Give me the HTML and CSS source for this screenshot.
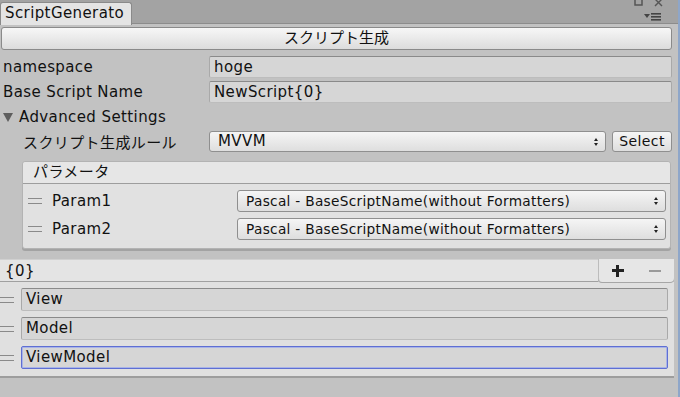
FILE: index.html
```html
<!DOCTYPE html>
<html lang="ja">
<head>
    <meta charset="UTF-8">
    <title>ScriptGenerator</title>
    <link rel="stylesheet" href="styles.css">
</head>
<body>
    <div class="window">
        <div class="tabbar">
            <div class="tab">ScriptGenerato</div>
            <div class="tab-icons">
                <svg class="icon-top" width="40" height="22" viewBox="0 0 40 22">
                    <rect x="3" y="-2" width="7" height="7" fill="none" stroke="#555" stroke-width="1.5"/>
                    <path d="M23 -1 L30 6 M30 -1 L23 6" stroke="#555" stroke-width="1.4"/>
                    <path d="M12 14 L18 14 L15 18 Z" fill="#444"/>
                    <rect x="19" y="13" width="10" height="1.6" fill="#444"/>
                    <rect x="19" y="16" width="10" height="1.6" fill="#444"/>
                    <rect x="19" y="19" width="10" height="1.6" fill="#444"/>
                </svg>
            </div>
        </div>

        <div class="content">
            <div class="btn-generate">スクリプト生成</div>

            <div class="row">
                <div class="label">namespace</div>
                <div class="field">hoge</div>
            </div>
            <div class="row">
                <div class="label">Base Script Name</div>
                <div class="field">NewScript{0}</div>
            </div>

            <div class="foldout">
                <span class="arrow"></span>
                <span>Advanced Settings</span>
            </div>

            <div class="row">
                <div class="label indent">スクリプト生成ルール</div>
                <div class="popup grow">MVVM<span class="updown"></span></div>
                <div class="btn-select">Select</div>
            </div>

            <div class="param-box">
                <div class="param-head">パラメータ</div>
                <div class="param-row">
                    <span class="handle"></span>
                    <span class="param-name">Param1</span>
                    <div class="popup small">Pascal - BaseScriptName(without Formatters)<span class="updown"></span></div>
                </div>
                <div class="param-row">
                    <span class="handle"></span>
                    <span class="param-name">Param2</span>
                    <div class="popup small">Pascal - BaseScriptName(without Formatters)<span class="updown"></span></div>
                </div>
            </div>

            <div class="list">
                <div class="list-top">
                    <div class="list-head">{0}</div>
                    <div class="list-footer">
                        <span class="plus"></span>
                        <span class="minus"></span>
                    </div>
                </div>
                <div class="list-body">
                    <div class="list-item">
                        <span class="handle"></span>
                        <div class="field">View</div>
                    </div>
                    <div class="list-item">
                        <span class="handle"></span>
                        <div class="field">Model</div>
                    </div>
                    <div class="list-item">
                        <span class="handle"></span>
                        <div class="field focus">ViewModel</div>
                    </div>
                </div>
            </div>
        </div>
    </div>
</body>
</html>
```

FILE: styles.css
```css
body {
    margin: 0;
    padding: 0;
    font-family: "DejaVu Sans", "Noto Sans CJK JP", sans-serif;
    font-size: 15px;
    letter-spacing: 0.4px;
    color: #111;
    background: #c2c2c2;
}
.window {
    width: 678px;
    height: 397px;
    border-right: 2px solid #8ea6c9;
    background: #c2c2c2;
    overflow: hidden;
}
.tabbar {
    display: flex;
    justify-content: space-between;
    height: 23px;
    background: #a3a3a3;
    border-bottom: 1px solid #8c8c8c;
}
.tab {
    margin-top: 2px;
    padding: 0 7px 0 4px;
    height: 22px;
    line-height: 21px;
    background: #e4e4e4;
    border: 1px solid #8a8a8a;
    border-bottom: none;
    border-radius: 3px 3px 0 0;
}
.tab-icons {
    padding-right: 6px;
}
.icon-top {
    display: block;
}
.content {
    padding-top: 3px;
}
.btn-generate {
    margin: 0 6px 0 1px;
    height: 21px;
    line-height: 21px;
    text-align: center;
    border: 1px solid #8a8a8a;
    border-radius: 3px;
    background: linear-gradient(#f7f7f7, #dcdcdc);
    letter-spacing: 0;
}
.row {
    display: flex;
    align-items: center;
    margin: 3px 6px 0 0;
}
.btn-generate + .row {
    margin-top: 6px;
}
.label {
    width: 206px;
    padding-left: 3px;
    flex-shrink: 0;
}
.label.indent {
    width: 186px;
    padding-left: 23px;
}
.field {
    flex: 1;
    height: 20px;
    line-height: 20px;
    padding-left: 4px;
    background: #d6d6d6;
    border: 1px solid #a9a9a9;
    border-top-color: #8a8a8a;
    border-bottom-color: #bdbdbd;
    border-radius: 2px;
}
.field.focus {
    border: 1px solid #5f6fd3;
    box-shadow: inset 0 0 0 1px #a9b4e8;
}
.foldout {
    display: flex;
    align-items: center;
    height: 22px;
    margin-top: 3px;
    padding-left: 3px;
}
.arrow {
    width: 0;
    height: 0;
    margin-right: 6px;
    border-left: 5px solid transparent;
    border-right: 5px solid transparent;
    border-top: 9px solid #5e5e5e;
}
.popup {
    position: relative;
    height: 19px;
    line-height: 19px;
    padding-left: 8px;
    border: 1px solid #8f8f8f;
    border-radius: 3px;
    background: linear-gradient(#f5f5f5, #dedede);
}
.popup.grow {
    flex: 1;
}
.popup.small {
    margin-left: auto;
    width: 419px;
    height: 20px;
    line-height: 20px;
    font-size: 13.7px;
    letter-spacing: 0.3px;
}
.updown {
    position: absolute;
    right: 7px;
    top: 6px;
    width: 0;
    height: 0;
    border-left: 2.5px solid transparent;
    border-right: 2.5px solid transparent;
    border-bottom: 3px solid #222;
}
.updown::after {
    content: "";
    position: absolute;
    left: -2.5px;
    top: 5px;
    border-left: 2.5px solid transparent;
    border-right: 2.5px solid transparent;
    border-top: 3px solid #222;
}
.btn-select {
    margin-left: 6px;
    width: 58px;
    height: 19px;
    line-height: 19px;
    text-align: center;
    font-size: 14px;
    border: 1px solid #8f8f8f;
    border-radius: 3px;
    background: linear-gradient(#f5f5f5, #dedede);
}
.param-box {
    margin: 9px 7px 0 22px;
    height: 86px;
    background: #e1e1e1;
    border: 1px solid #b3b3b3;
    border-radius: 3px;
    box-shadow: 0 2px 0 #a3a3a3;
}
.param-head {
    height: 21px;
    line-height: 21px;
    padding-left: 10px;
    background: #e6e6e6;
    border-bottom: 1px solid #9d9d9d;
    border-radius: 3px 3px 0 0;
}
.param-row {
    display: flex;
    align-items: center;
    margin: 6px 4px 0 5px;
}
.param-row + .param-row {
    margin-top: 6px;
}
.handle {
    width: 14px;
    height: 4px;
    border-top: 1px solid #8a8a8a;
    border-bottom: 1px solid #8a8a8a;
    flex-shrink: 0;
}
.param-name {
    margin-left: 10px;
}
.list {
    margin: 10px 4px 0 0;
}
.list-top {
    display: flex;
    height: 23px;
}
.list-head {
    flex: 1;
    padding-left: 5px;
    line-height: 22px;
    background: #e4e4e4;
    border-bottom: 1px solid #a0a0a0;
    border-top: 1px solid #d0d0d0;
}
.list-footer {
    display: flex;
    align-items: center;
    justify-content: space-around;
    width: 75px;
    background: #e6e6e6;
    border-left: 1px solid #bcbcbc;
    border-radius: 0 0 4px 4px;
    box-shadow: 0 1px 0 #a6a6a6;
}
.plus {
    position: relative;
    width: 12px;
    height: 3px;
    background: #222;
}
.plus::after {
    content: "";
    position: absolute;
    left: 4.5px;
    top: -4.5px;
    width: 3px;
    height: 12px;
    background: #222;
}
.minus {
    width: 12px;
    height: 2px;
    background: #9a9a9a;
}
.list-body {
    height: 93px;
    padding-top: 6px;
    background: #e0e0e0;
    border-bottom: 2px solid #9d9d9d;
    box-sizing: border-box;
    height: 96px;
}
.list-item {
    display: flex;
    align-items: center;
    margin: 0 6px 6px 0;
}
.list-item .handle {
    margin-right: 7px;
}
.list-item .field {
    height: 21px;
    line-height: 21px;
}
```
